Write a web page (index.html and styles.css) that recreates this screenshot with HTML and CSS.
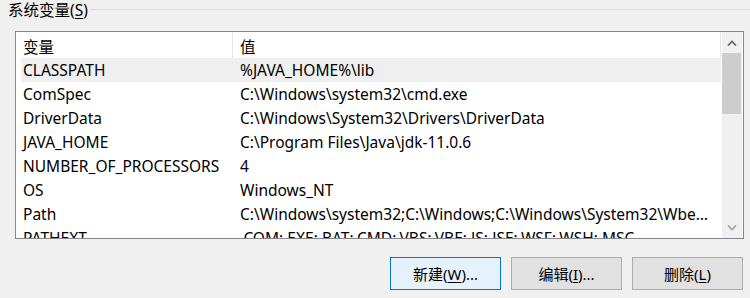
FILE: index.html
```html
<!DOCTYPE html>
<html>
  <head>
    <meta charset="UTF-8" />
    <title>系统变量</title>
    <link rel="stylesheet" href="styles.css">
  </head>
  <body>
    <div class="group">
      <div class="legend">
        <span class="legend-text">系统变量(<u>S</u>)</span>
        <span class="legend-line"></span>
      </div>

      <div class="list">
        <div class="table">
          <div class="head">
            <div class="hcell name">变量</div>
            <div class="hcell value">值</div>
          </div>
          <div class="rows">
            <div class="row selected"><span class="name">CLASSPATH</span><span class="value">%JAVA_HOME%\lib</span></div>
            <div class="row"><span class="name">ComSpec</span><span class="value">C:\Windows\system32\cmd.exe</span></div>
            <div class="row"><span class="name">DriverData</span><span class="value">C:\Windows\System32\Drivers\DriverData</span></div>
            <div class="row"><span class="name">JAVA_HOME</span><span class="value">C:\Program Files\Java\jdk-11.0.6</span></div>
            <div class="row"><span class="name">NUMBER_OF_PROCESSORS</span><span class="value">4</span></div>
            <div class="row"><span class="name">OS</span><span class="value">Windows_NT</span></div>
            <div class="row"><span class="name">Path</span><span class="value">C:\Windows\system32;C:\Windows;C:\Windows\System32\Wbem;C:\Windows\System32\WindowsPowerShell\v1.0\</span></div>
            <div class="row"><span class="name">PATHEXT</span><span class="value">.COM;.EXE;.BAT;.CMD;.VBS;.VBE;.JS;.JSE;.WSF;.WSH;.MSC</span></div>
          </div>
        </div>
        <div class="scrollbar">
          <div class="arrow up">
            <svg width="10" height="6" viewBox="0 0 10 6"><path d="M1 5.5 L5 1.5 L9 5.5" fill="none" stroke="#606060" stroke-width="1.6"/></svg>
          </div>
          <div class="track">
            <div class="thumb"></div>
          </div>
          <div class="arrow down">
            <svg width="10" height="6" viewBox="0 0 10 6"><path d="M1 0.5 L5 4.5 L9 0.5" fill="none" stroke="#a0a0a0" stroke-width="1.6"/></svg>
          </div>
        </div>
      </div>

      <div class="buttons">
        <button class="btn default">新建(<u>W</u>)...</button>
        <button class="btn">编辑(<u>I</u>)...</button>
        <button class="btn">删除(<u>L</u>)</button>
      </div>
    </div>
  </body>
</html>
```

FILE: styles.css
```css
body {
  margin: 0;
  background: #f0f0f0;
  font-family: "Noto Sans", "Noto Sans CJK SC", sans-serif;
  font-size: 15.5px;
  color: #000;
  overflow: hidden;
}

.group {
  width: 750px;
  height: 298px;
}

.legend {
  display: flex;
  align-items: center;
  height: 20px;
  padding-left: 8px;
}

.legend-text {
  line-height: 20px;
  padding-right: 2px;
  margin-top: -1px;
}

.legend-line {
  flex: 1;
  height: 1px;
  background: #dcdcdc;
  margin-top: -1px;
}

.list {
  display: flex;
  margin: 11px 0 0 15px;
  width: 727px;
  height: 206px;
  border: 1px solid #828790;
  background: #fff;
  overflow: hidden;
}

.table {
  width: 705px;
  overflow: hidden;
}

.head {
  display: flex;
  height: 26px;
  border-right: 1px solid #e5e5e5;
}

.hcell {
  line-height: 24px;
  padding: 3px 0 0 7px;
}

.hcell.name {
  width: 209px;
  border-right: 1px solid #e5e5e5;
}

.rows {
  padding-left: 5px;
}

.row {
  display: flex;
  height: 24px;
  line-height: 25px;
  white-space: nowrap;
}

.row.selected {
  background: #efefef;
}

.row .name {
  width: 217px;
  padding-left: 2px;
  flex: none;
}

.row .value {
  width: 474px;
  overflow: hidden;
  text-overflow: ellipsis;
}

.scrollbar {
  width: 20px;
  margin-left: 1px;
  background: #f0f0f0;
  display: flex;
  flex-direction: column;
}

.arrow {
  height: 21px;
  display: flex;
  align-items: center;
  justify-content: center;
}

.track {
  flex: 1;
}

.thumb {
  height: 61px;
  width: 19px;
  background: #cdcdcd;
}

.buttons {
  display: flex;
  justify-content: flex-end;
  gap: 10px;
  margin-top: 18px;
  padding-right: 7px;
}

.btn {
  width: 111px;
  height: 33px;
  font-family: inherit;
  font-size: 15px;
  color: #000;
  background: #e1e1e1;
  border: 1px solid #adadad;
  border-radius: 0;
  padding: 0;
}

.btn.default {
  background: #e5f1fb;
  border: 1px solid #0078d7;
}

u {
  text-underline-offset: 2px;
}
```
